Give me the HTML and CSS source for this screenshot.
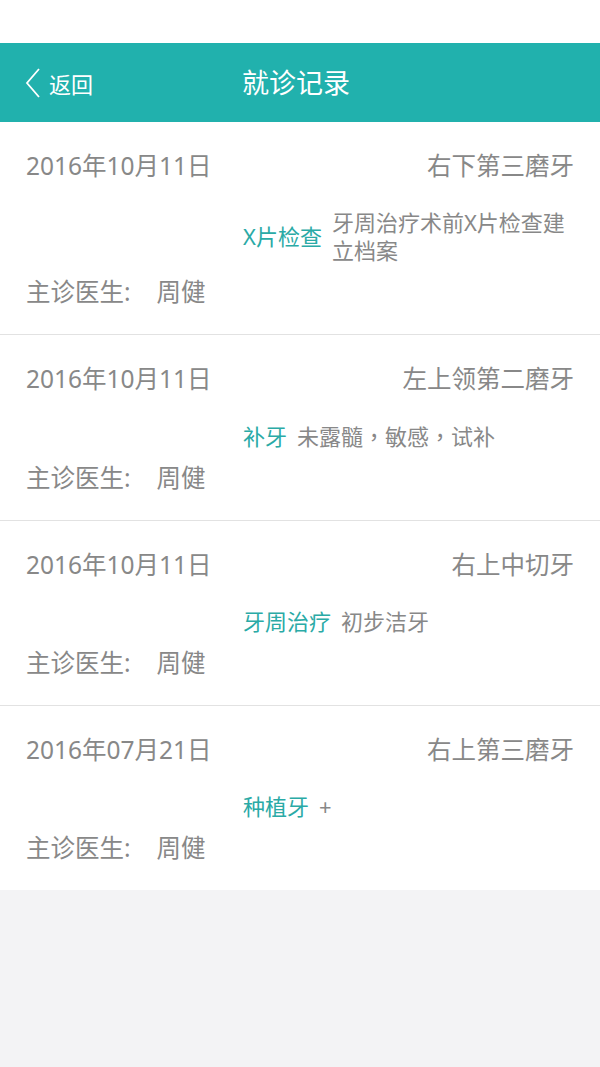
FILE: index.html
```html
<!DOCTYPE html>
<html lang="zh-CN">
<head>
<meta charset="utf-8">
<title>就诊记录</title>
<link rel="stylesheet" href="styles.css">
</head>
<body>
<div class="status"></div>
<header class="topbar">
  <div class="back">
    <svg class="chev" width="16" height="30" viewBox="0 0 16 30"><path d="M14 1 L2 15 L14 29" fill="none" stroke="#fff" stroke-width="1.8"/></svg>
    <span>返回</span>
  </div>
  <h1 class="title">就诊记录</h1>
</header>
<main class="list">
  <section class="card">
    <div class="row-top"><span>2016年10月11日</span><span>右下第三磨牙</span></div>
    <div class="row-mid"><span class="tag">X片检查</span><span class="desc">牙周治疗术前X片检查建立档案</span></div>
    <div class="row-doc"><span class="label">主诊医生:</span><span class="name">周健</span></div>
  </section>
  <section class="card">
    <div class="row-top"><span>2016年10月11日</span><span>左上领第二磨牙</span></div>
    <div class="row-mid"><span class="tag">补牙</span><span class="desc">未露髓<span class="punct" lang="zh-TW">，</span>敏感<span class="punct" lang="zh-TW">，</span>试补</span></div>
    <div class="row-doc"><span class="label">主诊医生:</span><span class="name">周健</span></div>
  </section>
  <section class="card">
    <div class="row-top"><span>2016年10月11日</span><span>右上中切牙</span></div>
    <div class="row-mid"><span class="tag">牙周治疗</span><span class="desc">初步洁牙</span></div>
    <div class="row-doc"><span class="label">主诊医生:</span><span class="name">周健</span></div>
  </section>
  <section class="card last">
    <div class="row-top"><span>2016年07月21日</span><span>右上第三磨牙</span></div>
    <div class="row-mid"><span class="tag">种植牙</span><span class="desc">+</span></div>
    <div class="row-doc"><span class="label">主诊医生:</span><span class="name">周健</span></div>
  </section>
</main>
</body>
</html>
```
FILE: styles.css
```css
html, body {
  margin: 0;
  padding: 0;
}
body {
  background: #f3f3f5;
  font-family: "Noto Sans", "Noto Sans CJK SC", sans-serif;
  color: #888888;
  min-height: 1067px;
}
.status {
  height: 43px;
  background: #ffffff;
}
.topbar {
  height: 79px;
  background: #21b1ad;
  display: flex;
  align-items: center;
  position: relative;
  color: #ffffff;
}
.back {
  display: flex;
  align-items: center;
  padding-left: 25px;
  font-size: 22px;
  gap: 8px;
}
.chev {
  display: block;
}
.title {
  position: absolute;
  left: 0;
  right: 0;
  top: 0;
  bottom: 0;
  display: flex;
  align-items: center;
  justify-content: center;
  margin: 0;
  font-size: 27px;
  font-weight: normal;
  padding-right: 8px;
  padding-bottom: 2px;
  pointer-events: none;
}
.list {
  background: #ffffff;
}
.card {
  padding: 28px 26px 26px;
  border-bottom: 1px solid #e2e2e2;
}
.card.last {
  border-bottom: none;
}
.row-top {
  display: flex;
  justify-content: space-between;
  font-size: 24.5px;
  line-height: 32px;
}
.row-mid {
  display: flex;
  align-items: center;
  margin-top: 26px;
  padding-left: 217px;
  font-size: 22px;
  line-height: 28px;
  gap: 10px;
}
.tag {
  color: #2aaaa6;
  white-space: nowrap;
}
.desc {
  flex: 1;
}
.punct {
  font-family: "Noto Sans CJK TC", sans-serif;
}
.row-doc {
  margin-top: 12px;
  font-size: 24.5px;
  line-height: 32px;
  display: flex;
}
.name {
  margin-left: 26px;
}
```
